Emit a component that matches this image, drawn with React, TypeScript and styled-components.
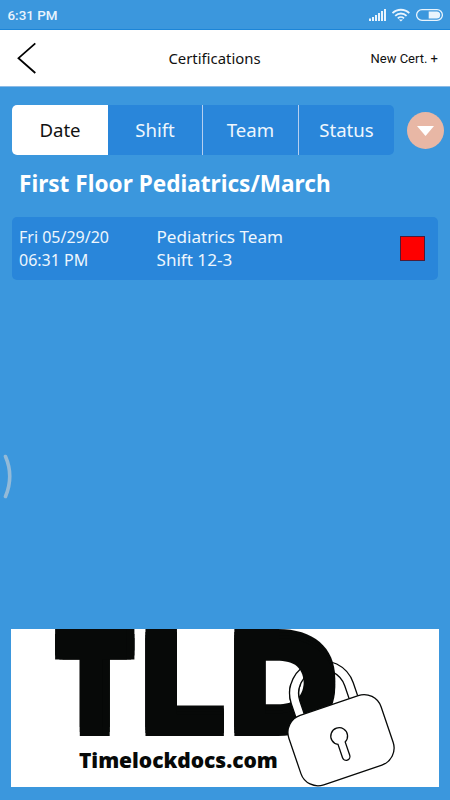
import React from "react";
import styled, { createGlobalStyle } from "styled-components";

const GlobalStyle = createGlobalStyle`
  * { box-sizing: border-box; }
  body { margin: 0; background: #3b97dd; }
`;

const Screen = styled.div`
  width: 450px;
  height: 800px;
  display: flex;
  flex-direction: column;
  position: relative;
  overflow: hidden;
  background: #3b97dd;
  font-family: "Noto Sans", "Open Sans", sans-serif;
  color: #fff;
`;

const StatusBar = styled.div`
  height: 30px;
  flex: none;
  display: flex;
  justify-content: space-between;
  padding: 0 6px 0 7.5px;
  border-bottom: 1px solid #1c85d8;
`;

const Clock = styled.span`
  font: 500 13.4px/31px Roboto, sans-serif;
  color: #e9f4fd;
`;

const Header = styled.header`
  height: 57px;
  flex: none;
  display: grid;
  grid-template-columns: 100px 1fr 120px;
  align-items: center;
  padding: 0 12px 0 11px;
  background: #fff;
  border-bottom: 1px solid #8cbbe6;
  color: #111;
`;

const BackButton = styled.button`
  display: flex;
  padding: 0;
  border: 0;
  background: none;
`;

const Title = styled.h1`
  margin: 0;
  text-align: center;
  font: 400 14.9px/20px "Noto Sans", sans-serif;
  white-space: nowrap;
`;

const NewButton = styled.button`
  padding: 1px 0 0;
  border: 0;
  background: none;
  color: #111;
  text-align: right;
  font: 400 13px/20px Roboto, sans-serif;
  white-space: nowrap;
`;

const Filters = styled.div`
  display: flex;
  align-items: center;
  gap: 12.5px;
  padding: 18px 0 0 12px;
`;

const Tabs = styled.div`
  width: 382px;
  height: 50px;
  display: grid;
  grid-template-columns: 96px 94px 96px 96px;
  border-radius: 5px;
  overflow: hidden;
  background: #2986da;
`;

const Tab = styled.button<{ $active?: boolean; $divided?: boolean }>`
  padding: 0;
  border: 0;
  border-left: ${(p) => (p.$divided ? "1px solid #b5cff0" : "0")};
  background: ${(p) => (p.$active ? "#fff" : "transparent")};
  color: ${(p) => (p.$active ? "#111" : "#eef6fd")};
  font: 400 18.6px/50px "Noto Sans", sans-serif;
`;

const SortButton = styled.button`
  width: 37px;
  height: 37px;
  padding: 1px 0 0;
  border: 0;
  border-radius: 50%;
  background: #e8b7a5;
  display: flex;
  align-items: center;
  justify-content: center;
`;

const Heading = styled.h2`
  margin: 12px 0 0 19px;
  font: 700 22.6px/34px "Noto Sans", sans-serif;
  white-space: nowrap;
`;

const Entry = styled.article`
  margin: 16px 12.5px 0 12px;
  height: 63px;
  flex: none;
  display: grid;
  grid-template-columns: 137.5px 1fr 25px;
  align-items: center;
  padding: 0 12.5px 0 7px;
  border-radius: 5px;
  background: #2986da;
`;

const Lines = styled.div<{ $size: number }>`
  display: flex;
  flex-direction: column;
  font-size: ${(p) => p.$size}px;
  line-height: 22.5px;
  color: #eef6fd;
  white-space: nowrap;
`;

const StatusMark = styled.div`
  width: 25px;
  height: 25px;
  background: #fe0000;
  border: 1px solid #4b1d3b;
`;

const Banner = styled.footer`
  position: relative;
  margin: auto 11px 13px 11px;
  height: 158px;
  flex: none;
  background: #fff;
  overflow: hidden;
  color: #070908;
`;

const Lock = styled.svg`
  position: absolute;
  left: 0;
  top: 0;
`;

const Wordmark = styled.div`
  position: relative;
  display: flex;
  height: 107px;
  padding-left: 41px;
  font: 900 135.3px/107px Inter, sans-serif;
`;

const Letter = styled.span<{ $width: number; $stretch: number; $shadow: string }>`
  width: ${(p) => p.$width}px;
  flex: none;
  padding-top: 5px;
  transform: scaleX(${(p) => p.$stretch});
  transform-origin: 0 0;
  text-shadow: ${(p) => p.$shadow};
`;

const SiteName = styled.div`
  position: relative;
  margin: 12px 0 0 68px;
  font: 800 21px/24px "Open Sans", sans-serif;
  letter-spacing: -0.04px;
  white-space: nowrap;
`;

const EdgeHandle = styled.svg`
  position: absolute;
  left: 0;
  top: 452px;
`;

function StatusIcons() {
  return (
    <svg width="76" height="29" viewBox="368 0 76 29" fill="none">
      <g fill="#e9f4fd">
        <rect x="369" y="18.5" width="2" height="2.5" />
        <rect x="372" y="17" width="2" height="4" />
        <rect x="375" y="15" width="2" height="6" />
        <rect x="378" y="13" width="2" height="8" />
        <rect x="381" y="11" width="2" height="10" />
        <rect x="384" y="9" width="2" height="12" />
      </g>
      <g stroke="#e9f4fd" strokeWidth="1.8">
        <path d="M392.5 13.2a12 12 0 0 1 16.8 0" />
        <path d="M395.2 15.8a8.2 8.2 0 0 1 11.4 0" />
        <path d="M397.8 18.3a4.6 4.6 0 0 1 6.2 0" />
      </g>
      <path d="M398.8 19.4h4.2l-2.1 2.2z" fill="#e9f4fd" />
      <rect x="416.6" y="9.6" width="25.8" height="10.8" rx="5.4" stroke="#e9f4fd" strokeWidth="1.3" />
      <path d="M428.7 11.5h8a3.5 3.5 0 0 1 0 7h-8z" fill="#e9f4fd" />
    </svg>
  );
}

const LIFT = "0 -3px 0, 0 -6px 0, 0 -9px 0";
const LIFT_AND_WIDEN = "0 -9px 0, 9px 0 0, 9px -9px 0, 5px -4px 0, 9px -4px 0, 0 -4px 0, 5px 0 0";

const SHACKLE =
  "M-35.3 -34V-50.4A32.7 32.7 0 0 1 30.1 -50.4V-34H21.1V-50.4A23.7 23.7 0 0 0 -26.3 -50.4V-34Z";
const LOCK_PLACE = "translate(341 740.2) rotate(-18.8)";

function Logo() {
  return (
    <>
      <Lock width="428" height="158" viewBox="11 629 428 158" fill="none">
        <path d={SHACKLE} transform={LOCK_PLACE} stroke="#070908" strokeWidth="1.3" />
      </Lock>
      <Wordmark>
        <Letter $width={86} $stretch={0.84} $shadow={LIFT_AND_WIDEN}>T</Letter>
        <Letter $width={89} $stretch={1.18} $shadow={LIFT}>L</Letter>
        <Letter $width={110} $stretch={1.162} $shadow={LIFT}>D</Letter>
      </Wordmark>
      <SiteName>Timelockdocs.com</SiteName>
      <Lock width="428" height="158" viewBox="11 629 428 158" fill="none">
        <defs>
          <clipPath id="front">
            <rect x="280" y="684" width="26" height="49" />
          </clipPath>
        </defs>
        <g clipPath="url(#front)">
          <path d={SHACKLE} transform={LOCK_PLACE} stroke="#070908" strokeWidth="1.3" fill="#fff" />
        </g>
        <g transform={LOCK_PLACE} stroke="#070908" strokeWidth="1.3" fill="#fff">
          <rect x="-48.7" y="-36.7" width="97.4" height="73.4" rx="18" />
          <path
            d="M-3.8 3.9A8.4 8.4 0 1 1 3.8 3.9V18A3.8 3.8 0 0 1 -3.8 18Z"
            transform="translate(-.4 -.9)"
          />
        </g>
      </Lock>
    </>
  );
}

export default function App() {
  return (
    <Screen>
      <GlobalStyle />
      <StatusBar>
        <Clock>6:31 PM</Clock>
        <StatusIcons />
      </StatusBar>
      <Header>
        <BackButton aria-label="Back">
          <svg width="30" height="36" viewBox="11 40 30 36" fill="none">
            <path d="M35.3 43.3 18.5 58.2 35.3 73" stroke="#000" strokeWidth="1.8" />
          </svg>
        </BackButton>
        <Title>Certifications</Title>
        <NewButton>New Cert. +</NewButton>
      </Header>
      <Filters>
        <Tabs>
          <Tab $active>Date</Tab>
          <Tab>Shift</Tab>
          <Tab $divided>Team</Tab>
          <Tab $divided>Status</Tab>
        </Tabs>
        <SortButton aria-label="Sort">
          <svg width="17" height="10" viewBox="0 0 17 10">
            <path d="M0 0h17L8.5 10z" fill="#fff" />
          </svg>
        </SortButton>
      </Filters>
      <Heading>First Floor Pediatrics/March</Heading>
      <Entry>
        <Lines $size={16}>
          <span>Fri 05/29/20</span>
          <span>06:31 PM</span>
        </Lines>
        <Lines $size={17.1}>
          <span>Pediatrics Team</span>
          <span>Shift 12-3</span>
        </Lines>
        <StatusMark />
      </Entry>
      <Banner>
        <Logo />
      </Banner>
      <EdgeHandle width="14" height="50" viewBox="0 452 14 50" fill="none">
        <path d="M5.5 456.5Q14 476 5.5 496.5" stroke="#93bad8" strokeWidth="3.6" strokeLinecap="round" />
      </EdgeHandle>
    </Screen>
  );
}
